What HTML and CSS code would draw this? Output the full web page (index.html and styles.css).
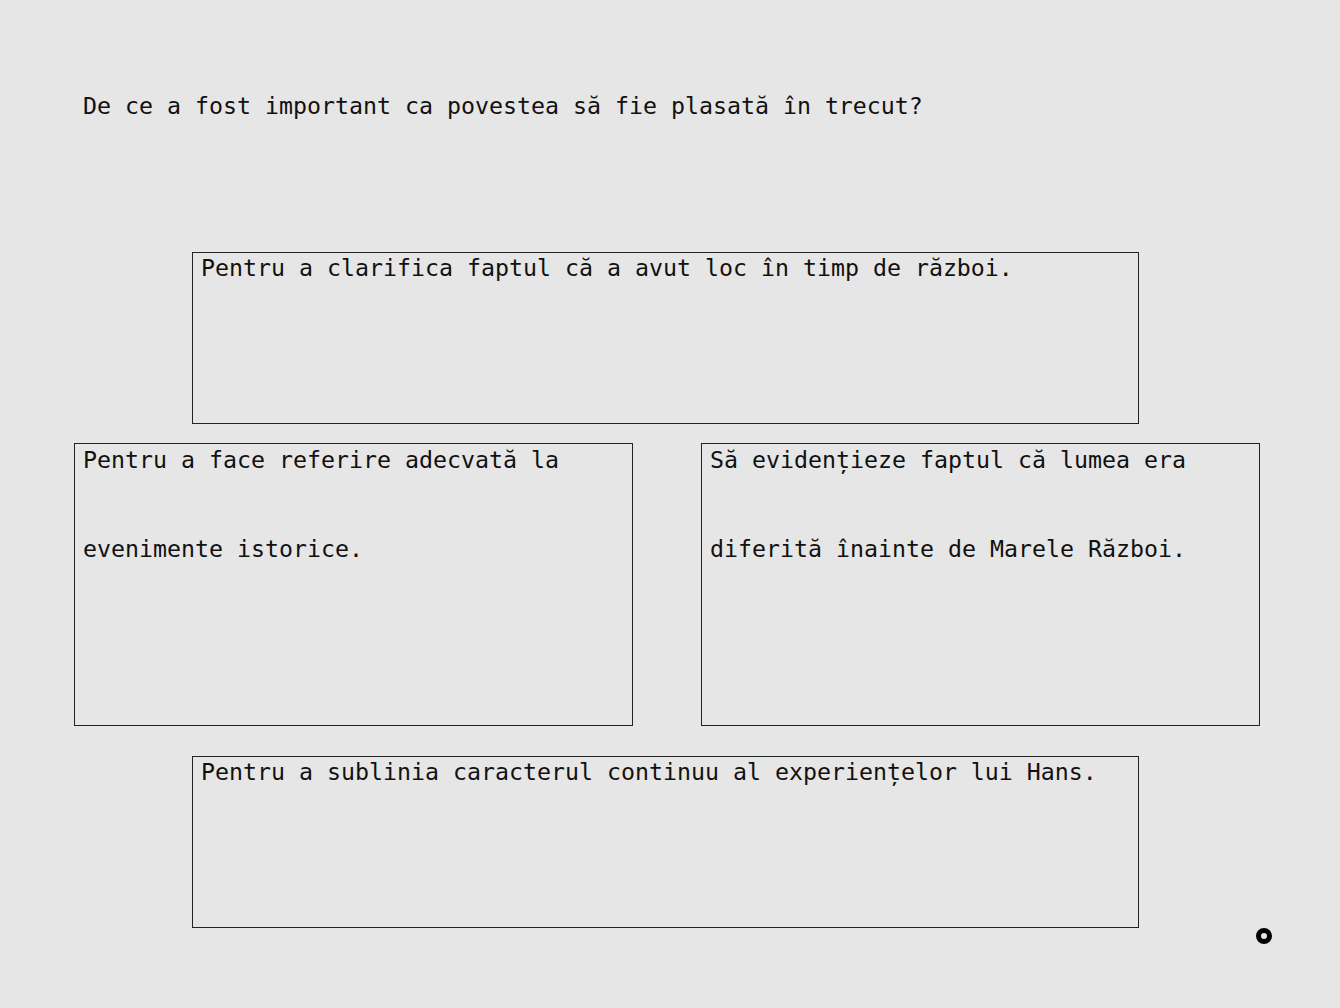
FILE: index.html
```html
<!DOCTYPE html>
<html lang="ro">
<head>
<meta charset="utf-8">
<title>Întrebare</title>
<link rel="stylesheet" href="styles.css">
</head>
<body>
<main class="page">
  <h1 class="question">De ce a fost important ca povestea să fie plasată în trecut?</h1>
  <div class="answer answer-wide answer-top"><p class="answer-text">Pentru a clarifica faptul că a avut loc în timp de război.</p></div>
  <div class="row">
    <div class="answer answer-half"><p class="answer-text">Pentru a face referire adecvată la evenimente istorice.</p></div>
    <div class="answer answer-half"><p class="answer-text">Să evidențieze faptul că lumea era diferită înainte de Marele Război.</p></div>
  </div>
  <div class="answer answer-wide answer-bottom"><p class="answer-text">Pentru a sublinia caracterul continuu al experiențelor lui Hans.</p></div>
</main>
<div class="cursor-ring" aria-hidden="true"></div>
</body>
</html>
```

FILE: styles.css
```css
html, body {
  margin: 0;
  padding: 0;
  background: #e6e6e6;
}

body {
  width: 1340px;
  height: 1008px;
  position: relative;
  overflow: hidden;
  font-family: "DejaVu Sans Mono", "Liberation Mono", monospace;
  font-size: 23.25px;
  color: #111;
}

.page {
  width: 1186px;
  margin-left: 74px;
  display: flex;
  flex-direction: column;
}

.question {
  margin: 92px 0 0 9px;
  font-size: inherit;
  font-weight: normal;
  line-height: 27px;
}

.answer {
  box-sizing: border-box;
  border: 1px solid #222;
  padding: 0 8px;
  overflow: hidden;
}

.answer-text {
  margin: -29px 0 0 0;
  line-height: 89px;
}

.answer-wide {
  width: 947px;
  height: 172px;
  margin-left: 118px;
}

.answer-wide .answer-text {
  margin-top: -30px;
}

.answer-top {
  margin-top: 133px;
}

.row {
  display: flex;
  gap: 68px;
  margin-top: 19px;
}

.answer-half {
  width: 559px;
  height: 283px;
}

.answer-bottom {
  margin-top: 30px;
}

.cursor-ring {
  position: absolute;
  left: 1256px;
  top: 928px;
  width: 6px;
  height: 6px;
  border: 5px solid #000;
  border-radius: 50%;
}
```
